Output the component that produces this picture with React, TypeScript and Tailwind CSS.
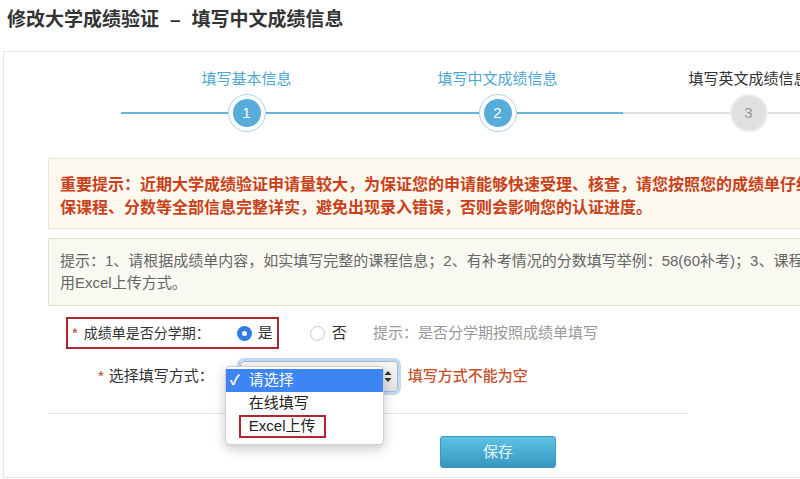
const steps = [
  { n: 1, label: "填写基本信息", done: true },
  { n: 2, label: "填写中文成绩信息", done: true },
  { n: 3, label: "填写英文成绩信息", done: false },
];

function Step({ n, label, done }: { n: number; label: string; done: boolean }) {
  return (
    <div className="flex w-[251px] shrink-0 flex-col items-center">
      <div
        className={`h-[20px] whitespace-nowrap text-[15px] leading-[20px] ${
          done ? "text-[#4fa6d1]" : "text-[#333]"
        }`}
      >
        {label}
      </div>
      <div className="mt-[5px] flex h-[38px] w-full items-center">
        <div className={`h-[2px] flex-1 ${done ? "bg-[#6ab3d7]" : "bg-[#dfdfdf]"}`} />
        {done ? (
          <div className="h-[38px] w-[38px] rounded-full border border-[#a9d4ea] bg-white p-[4px]">
            <div className="flex h-full w-full items-center justify-center rounded-full bg-[#58acd9] text-[15px] text-white">
              {n}
            </div>
          </div>
        ) : (
          <div className="flex h-[38px] w-[38px] items-center justify-center rounded-full border-2 border-[#ededed] bg-[#e0e0e0] text-[15px] text-[#999]">
            {n}
          </div>
        )}
        <div className={`h-[2px] flex-1 ${done ? "bg-[#6ab3d7]" : "bg-[#dfdfdf]"}`} />
      </div>
    </div>
  );
}

function SelectArrows() {
  return (
    <svg width="8" height="13" viewBox="0 0 8 13" className="text-[#333]">
      <path d="M4 1L7.5 5H0.5Z" fill="currentColor" />
      <path d="M4 12L7.5 8H0.5Z" fill="currentColor" />
    </svg>
  );
}

export default function App() {
  return (
    <div className="h-[479px] w-[800px] overflow-hidden bg-white font-['Liberation_Sans','Noto_Sans_CJK_SC',sans-serif] text-[#333]">
      <div className="h-[51px] pl-[7px] pt-[9px] text-[19px] font-bold leading-[22px] whitespace-nowrap text-[#333]">
        修改大学成绩验证<span className="mx-[11px]">–</span>填写中文成绩信息
      </div>

      <div className="ml-[3px] w-[900px] border-l border-t border-b border-[#e6e6e6] pb-[9px]">
        {/* steps */}
        <div className="ml-[117px] flex pt-[17px]">
          {steps.map((s) => (
            <Step key={s.n} {...s} />
          ))}
        </div>

        {/* important notice */}
        <div className="ml-[44px] mt-[26px] w-[820px] border border-[#ede6d4] bg-[#fdf9ee] pb-[9px] pl-[11px] pt-[14px] text-[16px] font-bold leading-[23px] whitespace-nowrap text-[#c9411b]">
          重要提示：近期大学成绩验证申请量较大，为保证您的申请能够快速受理、核查，请您按照您的成绩单仔细核对，确
          <br />
          保课程、分数等全部信息完整详实，避免出现录入错误，否则会影响您的认证进度。
        </div>

        {/* hint */}
        <div className="ml-[44px] mt-[9px] w-[820px] border border-[#e4e1d6] bg-[#f9f8f1] py-[11px] pl-[11px] text-[15px] leading-[22px] whitespace-nowrap text-[#666]">
          提示：1、请根据成绩单内容，如实填写完整的课程信息；2、有补考情况的分数填写举例：58(60补考)；3、课程较多的建议使
          <br />
          用Excel上传方式。
        </div>

        {/* row 1 */}
        <div className="mt-[11px] flex h-[32px] items-center text-[15px]">
          <div className="ml-[62px] flex h-[32px] items-center border-2 border-[#b0252f] pl-[4px] pr-[4px]">
            <span className="text-[#c0392b]">*</span>
            <span className="ml-[6px] text-[14px] text-[#333]">成绩单是否分学期：</span>
            <span className="ml-[27px] flex h-[15px] w-[15px] items-center justify-center rounded-full bg-[#2f7de1]">
              <span className="h-[5px] w-[5px] rounded-full bg-white" />
            </span>
            <span className="ml-[6px]">是</span>
          </div>
          <span className="ml-[31px] h-[15px] w-[15px] rounded-full border border-[#c9c9c9] bg-white" />
          <span className="ml-[7px]">否</span>
          <span className="ml-[26px] text-[#999]">提示：是否分学期按照成绩单填写</span>
        </div>

        {/* row 2 */}
        <div className="mt-[12px] flex h-[31px] items-center text-[15px]">
          <span className="ml-[94px] text-[#c0392b]">*</span>
          <span className="ml-[5px]">选择填写方式：</span>
          <div className="relative ml-[26px] flex h-[31px] w-[158px] items-center justify-end rounded-[4px] border border-[#a9b8cc] bg-gradient-to-b from-[#f7f7f7] to-[#e3e3e3] pr-[5px] shadow-[0_0_0_3px_rgba(120,170,235,0.45)]">
            <SelectArrows />
            <div className="absolute left-[-16px] top-[4px] z-10 w-[159px] rounded-[5px] border border-[#cfcfcf] bg-white pb-[6px] pt-[2px] shadow-[0_4px_12px_rgba(0,0,0,0.22)]">
              <div className="flex h-[23px] items-center bg-[#3d85f2] pl-[4px] text-white">
                <span className="w-[19px] text-[14px] font-bold">✓</span>
                <span>请选择</span>
              </div>
              <div className="flex h-[23px] items-center pl-[23px] text-[#222]">在线填写</div>
              <div className="flex h-[23px] items-center pl-[13px] text-[#222]">
                <span className="flex h-[23px] items-center border-2 border-[#b0252f] px-[8px]">Excel上传</span>
              </div>
            </div>
          </div>
          <span className="ml-[10px] font-medium text-[#c4502a]">填写方式不能为空</span>
        </div>

        <div className="ml-[44px] mt-[21px] h-px w-[640px] bg-[#e6e6e6]" />

        <button className="ml-[436px] mt-[22px] h-[32px] w-[116px] rounded-[3px] border border-[#3b98bf] bg-gradient-to-b from-[#5ec3e6] to-[#3597bf] text-[15px] text-[#eaf7fc]">
          保存
        </button>
      </div>
    </div>
  );
}
